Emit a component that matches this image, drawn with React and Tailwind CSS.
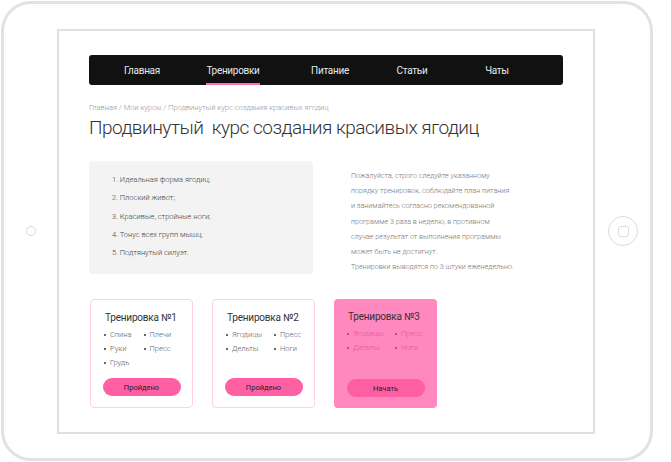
import React from 'react';

// centred boxes so each label sits where the mock has it
const navItems = [
  { label: 'Главная', ml: 'ml-0' },
  { label: 'Тренировки', ml: 'ml-[11px]', active: true },
  { label: 'Питание', ml: 'ml-[17px]' },
  { label: 'Статьи', ml: 'ml-[2px]' },
  { label: 'Чаты', ml: 'ml-[5px]' }
];

const goals = [
  '1. Идеальная форма ягодиц;',
  '2. Плоский живот;',
  '3. Красивые, стройные ноги;',
  '4. Тонус всех групп мышц;',
  '5. Подтянутый силуэт.'
];

const note = [
  'Пожалуйста, строго следуйте указанному',
  'порядку тренировок, соблюдайте план питания',
  'и занимайтесь согласно рекомендованной',
  'программе 3 раза в неделю, в противном',
  'случае результат от выполнения программы',
  'может быть не достигнут.',
  'Тренировки выводятся по 3 штуки еженедельно.'
];

const workouts = [
  { title: 'Тренировка №1', left: ['Спина', 'Руки', 'Грудь'], right: ['Плечи', 'Пресс'], done: true },
  { title: 'Тренировка №2', left: ['Ягодицы', 'Дельты'], right: ['Пресс', 'Ноги'], done: true },
  { title: 'Тренировка №3', left: ['Ягодицы', 'Дельты'], right: ['Пресс', 'Ноги'], done: false }
];

const BulletCol = ({ items, active }) => (
  <ul className="flex flex-col gap-[4px]">
    {items.map((item) => (
      <li
        key={item}
        className={`flex items-center gap-[4px] text-[7.5px] leading-[10px] font-light whitespace-nowrap ${
          active ? 'text-[#e4559a]' : 'text-[#666]'
        }`}
      >
        <span className={`w-[2px] h-[2px] rounded-full ${active ? 'bg-[#b8326f]' : 'bg-[#333]'}`} />
        {item}
      </li>
    ))}
  </ul>
);

const WorkoutCard = ({ title, left, right, done }) => (
  <div
    className={`w-[103px] h-[109px] rounded-[4px] flex flex-col pt-[11px] pb-[11px] px-[13px] ${
      done ? 'border border-[#ffcfe3] bg-white' : 'bg-[#ff88be]'
    }`}
  >
    <div className="text-[10px] leading-[13px] tracking-[-0.2px] text-[#333] pl-[1px] whitespace-nowrap">{title}</div>
    <div className="flex gap-[12px] mt-[6px]">
      <BulletCol items={left} active={!done} />
      <BulletCol items={right} active={!done} />
    </div>
    <button
      className={`mt-auto h-[18px] w-[78px] self-center rounded-full text-[7.5px] text-[#222] ${
        done ? 'bg-[#ff5fa3]' : 'bg-[#ff5ea2]'
      }`}
    >
      {done ? 'Пройдено' : 'Начать'}
    </button>
  </div>
);

export default function App() {
  return (
    <div className="w-[671px] h-[462px] bg-white pl-[1px] pt-[1px]" style={{ fontFamily: 'Roboto, sans-serif' }}>
      <div className="w-[652px] h-[460px] border-[3px] border-[#e2e2e2] rounded-[30px] flex items-center pl-[22px]">
        {/* camera */}
        <div className="w-[10px] h-[10px] rounded-full border border-[#d8d8d8]" />

        {/* screen */}
        <div className="self-start mt-[25px] ml-[21px] w-[538px] h-[405px] border-2 border-[#e0e0e0] px-[30px] pt-[24px]">
          <nav className="h-[30px] bg-[#111] rounded-[3px] flex items-stretch pl-[13px]">
            {navItems.map((item) => (
              <div key={item.label} className={`w-[80px] flex justify-center ${item.ml}`}>
                <span className="relative h-full flex items-center text-[10px] tracking-[-0.3px] text-[#e8e8e8]">
                  {item.label}
                  {item.active && <span className="absolute left-0 right-0 bottom-0 h-[2px] bg-[#ff6eb0]" />}
                </span>
              </div>
            ))}
          </nav>

          <div className="mt-[18px] text-[7.5px] leading-[10px] font-light text-[#999]">
            Главная / Мои курсы / Продвинутый курс создания красивых ягодиц
          </div>
          <h1 className="mt-[3px] text-[19px] leading-[24px] font-light tracking-[-0.5px] text-[#333]">
            Продвинутый&nbsp; курс создания красивых ягодиц
          </h1>

          <div className="flex mt-[21px]">
            <div className="w-[224px] h-[113px] bg-[#f3f3f3] rounded-[4px] pl-[23px] pt-[14px]">
              <ul className="flex flex-col gap-[8.3px]">
                {goals.map((g) => (
                  <li key={g} className="text-[7.5px] leading-[10px] font-light text-[#444]">
                    {g}
                  </li>
                ))}
              </ul>
            </div>
            <p className="ml-[38px] mt-[7px] text-[7.2px] leading-[15.2px] font-light text-[#777] whitespace-nowrap">
              {note.map((line) => (
                <span key={line} className="block">{line}</span>
              ))}
            </p>
          </div>

          <div className="flex gap-[19px] mt-[25px] pl-[1px]">
            {workouts.map((w) => (
              <WorkoutCard key={w.title} {...w} />
            ))}
          </div>
        </div>

        {/* home button */}
        <div className="ml-[13px] w-[30px] h-[30px] rounded-full border border-[#dcdcdc] flex items-center justify-center">
          <div className="w-[11px] h-[11px] rounded-[3px] border border-[#dcdcdc]" />
        </div>
      </div>
    </div>
  );
}
